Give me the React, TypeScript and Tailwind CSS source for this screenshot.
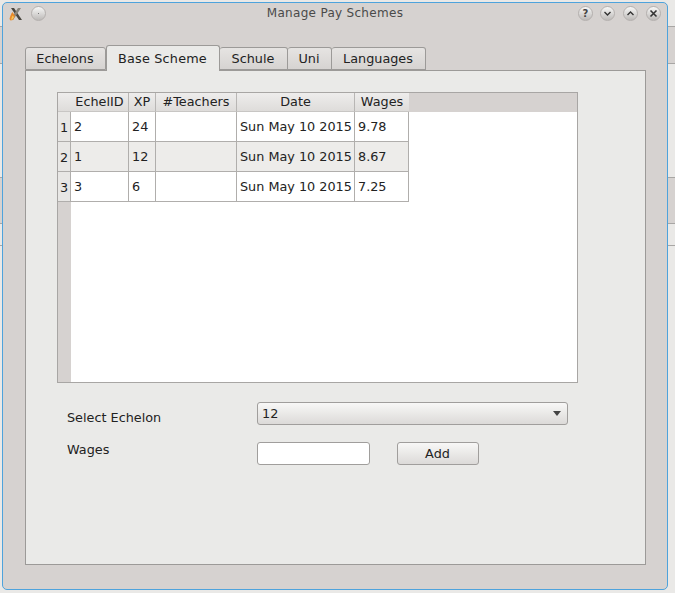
import React from 'react';

const rows = [
  { id: '1', echel: '2', xp: '24', date: 'Sun May 10 2015', wages: '9.78' },
  { id: '2', echel: '1', xp: '12', date: 'Sun May 10 2015', wages: '8.67' },
  { id: '3', echel: '3', xp: '6', date: 'Sun May 10 2015', wages: '7.25' },
];

const headers = [
  { label: 'EchelID', w: 'w-[58px]' },
  { label: 'XP', w: 'w-[27px]' },
  { label: '#Teachers', w: 'w-[81px]' },
  { label: 'Date', w: 'w-[118px]' },
  { label: 'Wages', w: 'w-[54px]' },
];

const tabs = ['Echelons', 'Base Scheme', 'Schule', 'Uni', 'Languages'];

const CircleButton = ({ children }: { children?: React.ReactNode }) => (
  <div className="flex h-[15px] w-[15px] items-center justify-center rounded-full border border-[#b4b0ae] bg-gradient-to-b from-[#f8f8f7] to-[#bdbab8]">
    {children}
  </div>
);

const App = () => {
  return (
    <div className="relative h-[593px] w-[675px] overflow-hidden bg-[#eae9e7] font-['DejaVu_Sans',sans-serif] text-[12.8px] text-[#222]">
      {/* Windows behind this one */}
      <div className="flex flex-col">
        <div className="h-[26px]" />
        <div className="h-[38px] border-y border-[#a8a6a4] bg-[#d6d2d0]" />
        <div className="h-[113px]" />
        <div className="h-[47px] border-y border-[#a8a6a4] bg-[#d6d2d0]" />
        <div className="h-[21px]" />
        <div className="h-[348px] border-t border-[#a8a6a4] bg-[#eae9e7]" />
      </div>
      <div className="absolute left-[665px] top-[293px] flex flex-col gap-[2px]">
        <div className="h-[1px] w-[1px] bg-[#777]" />
        <div className="h-[1px] w-[1px] bg-[#777]" />
        <div className="h-[1px] w-[1px] bg-[#777]" />
      </div>

      {/* Dialog */}
      <div className="absolute left-[2px] top-[2px] flex h-[588px] w-[666px] flex-col rounded-[5px] border border-[#4ea3dc] bg-[#d6d2d0]">
        <div className="relative flex h-[21px] shrink-0 items-center">
          <div className="ml-[5px] flex items-center gap-[7px]">
            <svg width="16" height="16" viewBox="0 0 16 16">
              <path d="M3 2 L6 2 L14 14 L11 14Z" fill="#4a463f" />
              <path d="M13 2 L10 2 L2 14 L5 14Z" fill="#8a857a" />
              <path d="M1.5 13 C2 10 3 8 4.5 6 L7 10 L5 14 L2.5 14.5Z" fill="#e98a2a" />
              <path d="M3 13.5 L4.5 9.5 L6 11 L4.5 13.5Z" fill="#f6c65a" />
            </svg>
            <CircleButton>
              <div className="h-[1px] w-[1px] bg-[#777]" />
            </CircleButton>
          </div>
          <div className="absolute inset-x-0 top-[2px] text-center text-[12px] leading-[16px] tracking-[0.3px] text-[#4a4a4a]">Manage Pay Schemes</div>
          <div className="ml-auto mr-[6px] flex items-center gap-[8px]">
            <div className="-mr-[1px]">
              <CircleButton>
                <span className="text-[10px] font-bold leading-none text-[#444]">?</span>
              </CircleButton>
            </div>
            <CircleButton>
              <svg width="9" height="9" viewBox="0 0 9 9"><path d="M1.5 3 L4.5 6 L7.5 3" fill="none" stroke="#333" strokeWidth="1.4" /></svg>
            </CircleButton>
            <CircleButton>
              <svg width="9" height="9" viewBox="0 0 9 9"><path d="M1.5 6 L4.5 3 L7.5 6" fill="none" stroke="#333" strokeWidth="1.4" /></svg>
            </CircleButton>
            <CircleButton>
              <svg width="9" height="9" viewBox="0 0 9 9"><path d="M1.5 1.5 L7.5 7.5 M7.5 1.5 L1.5 7.5" fill="none" stroke="#333" strokeWidth="1.6" /></svg>
            </CircleButton>
          </div>
        </div>

        <div className="ml-[22px] mt-[22px] flex h-[24px] items-end">
          {tabs.map((t, i) =>
            i === 1 ? (
              <div key={t} className="z-10 mb-[-1px] flex h-[26px] w-[114px] items-center justify-center rounded-t-[3px] border border-b-0 border-[#9c9a98] bg-[#eaeae8] pr-[1px] tracking-[0.2px]">{t}</div>
            ) : (
              <div
                key={t}
                className={`flex h-[23px] items-center justify-center rounded-t-[3px] border border-[#9c9a98] bg-gradient-to-b from-[#e6e4e2] to-[#d6d3d1] pr-[1px] pt-[1px] ${
                  i === 0 ? 'w-[81px]' : i === 2 ? 'w-[68px] border-l-0' : i === 3 ? 'w-[44px] border-l-0' : 'w-[94px] border-l-0'
                }`}
              >
                {t}
              </div>
            ),
          )}
        </div>

        <div className="ml-[22px] h-[495px] w-[621px] border border-[#9c9a98] bg-[#eaeae8] pl-[31px] pt-[21px]">
          {/* Table */}
          <div className="flex h-[291px] w-[521px] flex-col border border-[#a8a6a4] bg-white">
            <div className="flex h-[19px] shrink-0 bg-[#d6d2d0]">
              <div className="h-full w-[13px] border-b border-[#c8c6c4] bg-gradient-to-b from-[#eeedec] to-[#dedcda]" />
              {headers.map((h) => (
                <div key={h.label} className={`${h.w} flex items-center justify-center border-r border-b border-r-[#b8b6b4] border-b-[#c8c6c4] bg-gradient-to-b from-[#eeedec] to-[#dedcda] pt-[1px] leading-none last:border-r-0`}>
                  {h.label}
                </div>
              ))}
            </div>
            <div className="flex flex-1">
              <div className="flex w-[13px] flex-col bg-[#d6d2d0]">
                {rows.map((r) => (
                  <div key={r.id} className="flex h-[30px] items-center justify-center border-b border-r border-[#b0aeac] bg-[#e8e7e5] pt-[2px]">{r.id}</div>
                ))}
              </div>
              <div className="flex flex-col">
                {rows.map((r, i) => (
                  <div key={r.id} className={`flex h-[30px] border-b border-[#b0aeac] ${i === 1 ? 'bg-[#edecea]' : 'bg-white'}`}>
                    <div className="w-[58px] border-r border-[#b0aeac] pl-[3px] pt-[7px] leading-[16px]">{r.echel}</div>
                    <div className="w-[27px] border-r border-[#b0aeac] pl-[3px] pt-[7px] leading-[16px]">{r.xp}</div>
                    <div className="w-[81px] border-r border-[#b0aeac]" />
                    <div className="w-[118px] border-r border-[#b0aeac] pl-[3px] pt-[7px] leading-[16px]">{r.date}</div>
                    <div className="w-[54px] border-r border-[#b0aeac] pl-[3px] pt-[7px] leading-[16px]">{r.wages}</div>
                  </div>
                ))}
              </div>
            </div>
          </div>

          {/* Form */}
          <div className="mt-[19px] flex h-[23px] items-center">
            <div className="w-[200px] pl-[10px] pt-[8px]">Select Echelon</div>
            <div className="flex h-[23px] w-[311px] items-center justify-between rounded-[3px] border border-[#a09e9c] bg-gradient-to-b from-[#f8f8f7] to-[#dcdad8] pl-[4px] pr-[6px]">
              <span>12</span>
              <div className="h-0 w-0 border-x-[4px] border-t-[5px] border-x-transparent border-t-[#444]" />
            </div>
          </div>
          <div className="mt-[17px] flex h-[23px] items-center">
            <div className="w-[200px] pb-[8px] pl-[10px]">Wages</div>
            <div className="h-[23px] w-[113px] rounded-[3px] border border-[#a09e9c] bg-white" />
            <div className="ml-[27px] flex h-[23px] w-[82px] items-center justify-center rounded-[3px] border border-[#a09e9c] bg-gradient-to-b from-[#f8f8f7] to-[#dcdad8] pr-[1px]">Add</div>
          </div>
        </div>
      </div>
    </div>
  );
};

export default App;
